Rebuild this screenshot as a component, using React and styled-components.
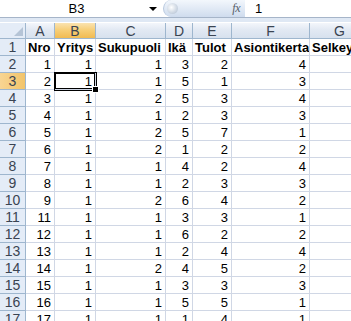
import React from 'react';
import styled, { createGlobalStyle } from 'styled-components';

const GlobalStyle = createGlobalStyle`
  html, body {
    margin: 0;
    padding: 0;
    background: #ffffff;
    overflow: hidden;
  }
  body {
    font-family: "Liberation Sans", Arial, sans-serif;
  }
`;

const columns = ['A', 'B', 'C', 'D', 'E', 'F', 'G'];
const widths = '26px 29px 41px 70px 27px 39px 78px 60px';
const headerRow = ['Nro', 'Yritys', 'Sukupuoli', 'Ikä', 'Tulot', 'Asiontikerta', 'Selkeys'];
const data = [
  [1, 1, 1, 3, 2, 4],
  [2, 1, 1, 5, 1, 3],
  [3, 1, 2, 5, 3, 4],
  [4, 1, 1, 2, 3, 3],
  [5, 1, 2, 5, 7, 1],
  [6, 1, 2, 1, 2, 2],
  [7, 1, 1, 4, 2, 4],
  [8, 1, 1, 2, 3, 3],
  [9, 1, 2, 6, 4, 2],
  [11, 1, 1, 3, 3, 1],
  [12, 1, 1, 6, 2, 2],
  [13, 1, 1, 2, 4, 4],
  [14, 1, 2, 4, 5, 2],
  [15, 1, 1, 3, 3, 3],
  [16, 1, 1, 5, 5, 1],
  [17, 1, 1, 1, 4, 1],
];

const Window = styled.div`
  width: 351px;
  height: 321px;
  overflow: hidden;
  background: #dfe8f4;
`;

const FormulaBar = styled.div`
  display: flex;
  align-items: center;
  height: 17px;
  background: #ffffff;
  border-bottom: 1px solid #a6b5c9;
`;

const NameBox = styled.div`
  width: 145px;
  text-align: center;
  font-size: 13px;
  color: #000;
  padding-left: 4px;
`;

const DropArrow = styled.div`
  width: 0;
  height: 0;
  border-left: 4px solid transparent;
  border-right: 4px solid transparent;
  border-top: 4px solid #000;
`;

const Pill = styled.div`
  margin-left: 6px;
  width: 82px;
  height: 17px;
  border-radius: 9px 0 0 9px;
  background: linear-gradient(#f3f7fc, #cfdcee);
  border-left: 1px solid #b8c8de;
  display: flex;
  align-items: center;
  justify-content: space-between;
  box-sizing: border-box;
  padding: 0 5px 0 3px;
`;

const Knob = styled.div`
  width: 11px;
  height: 11px;
  border-radius: 50%;
  background: radial-gradient(circle at 40% 40%, #ffffff, #c4cfdd 70%);
`;

const Fx = styled.span`
  font-family: "Liberation Serif", "Times New Roman", serif;
  font-style: italic;
  font-size: 12px;
  color: #555e6a;
  letter-spacing: -0.5px;
`;

const FormulaText = styled.div`
  margin-left: 10px;
  font-size: 13px;
  color: #000;
`;

const Gap = styled.div`
  height: 4px;
`;

const Grid = styled.div`
  display: grid;
  grid-template-columns: ${widths};
  grid-auto-rows: 17px;
  background: #ffffff;
`;

const HeaderBase = styled.div`
  box-sizing: border-box;
  display: flex;
  align-items: center;
  justify-content: center;
  font-size: 14px;
  color: #3a4452;
  border-right: 1px solid #9eb6ce;
  border-bottom: 1px solid #9eb6ce;
  background: ${p => (p.$active
    ? 'linear-gradient(#fae3b1, #f7cf7a 45%, #f1bb52)'
    : 'linear-gradient(#f3f6fb, #e2e9f3 45%, #d7e1ee)')};
`;

const ColHeader = styled(HeaderBase)`
  height: 16px;
  align-self: end;
`;

const RowHeader = styled(HeaderBase)`
  background: ${p => (p.$active ? 'linear-gradient(90deg, #f8d593, #f2c46a)' : '#e4ecf7')};
`;

const Corner = styled(HeaderBase)`
  height: 16px;
  align-self: end;
  position: relative;
  background: #e4ecf7;
  &::after {
    content: '';
    position: absolute;
    right: 2px;
    bottom: 2px;
    width: 0;
    height: 0;
    border-left: 9px solid transparent;
    border-bottom: 9px solid #b5c4d6;
  }
`;

const Cell = styled.div`
  box-sizing: border-box;
  position: relative;
  display: flex;
  align-items: center;
  justify-content: ${p => (p.$text ? 'flex-start' : 'flex-end')};
  padding: 0 3px 0 2px;
  font-size: 13px;
  font-weight: ${p => (p.$bold ? 700 : 400)};
  color: #000;
  white-space: nowrap;
  overflow: hidden;
  border-right: 1px solid #d0d7e5;
  border-bottom: 1px solid #d0d7e5;
  ${p => p.$selected && `
    overflow: visible;
    z-index: 1;
    box-shadow: 0 0 0 1px #000, inset 0 0 0 1px #000;
  `}
`;

const FillHandle = styled.div`
  position: absolute;
  right: -4px;
  bottom: -4px;
  width: 5px;
  height: 5px;
  background: #000;
  border: 1px solid #fff;
  z-index: 2;
`;

export default function App() {
  return (
    <Window>
      <GlobalStyle />
      <FormulaBar>
        <NameBox>B3</NameBox>
        <DropArrow />
        <Pill>
          <Knob />
          <Fx>fx</Fx>
        </Pill>
        <FormulaText>1</FormulaText>
      </FormulaBar>
      <Gap />
      <Grid>
        <Corner />
        {columns.map(c => (
          <ColHeader key={c} $active={c === 'B'}>{c}</ColHeader>
        ))}
        <RowHeader>1</RowHeader>
        {headerRow.map(h => (
          <Cell key={h} $bold $text>{h}</Cell>
        ))}
        {data.map((row, i) => (
          <React.Fragment key={i}>
            <RowHeader $active={i === 1}>{i + 2}</RowHeader>
            {row.map((v, j) => (
              <Cell key={j} $selected={i === 1 && j === 1}>
                {v}
                {i === 1 && j === 1 && <FillHandle />}
              </Cell>
            ))}
            <Cell />
          </React.Fragment>
        ))}
      </Grid>
    </Window>
  );
}
